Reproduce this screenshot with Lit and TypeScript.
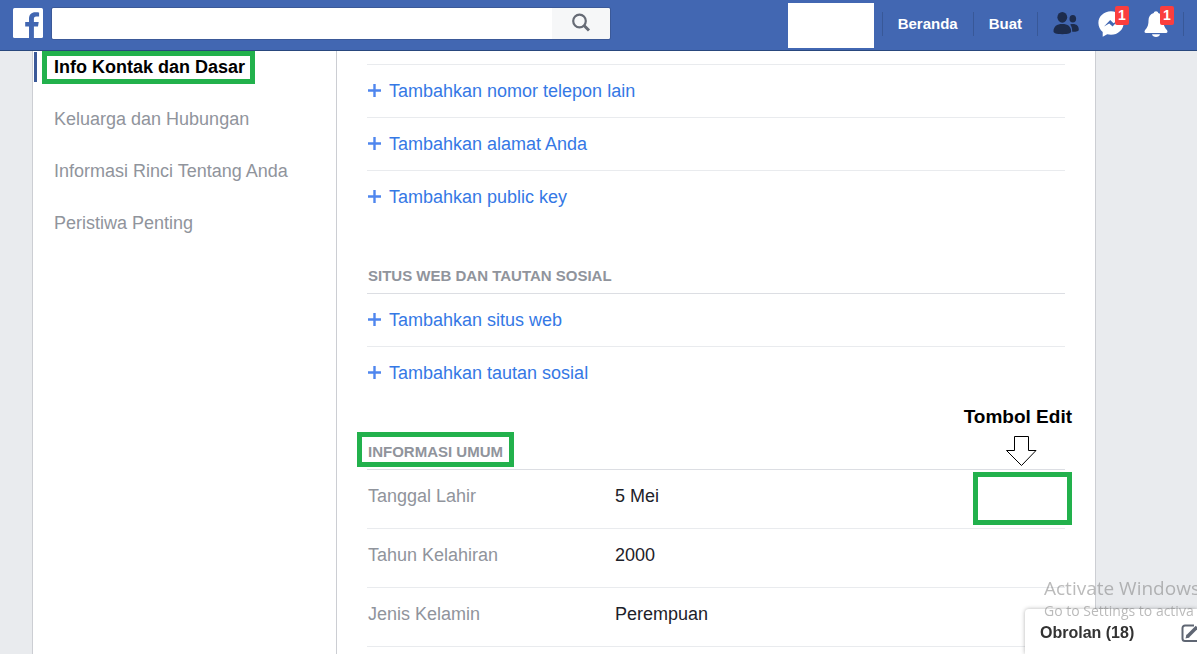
import { LitElement, html, css, svg } from "lit";
import { customElement, property } from "lit/decorators.js";

const NAV_ITEMS = [
  "Info Kontak dan Dasar",
  "Keluarga dan Hubungan",
  "Informasi Rinci Tentang Anda",
  "Peristiwa Penting",
];

const CONTACT_LINKS = [
  "Tambahkan nomor telepon lain",
  "Tambahkan alamat Anda",
  "Tambahkan public key",
];

const SITE_LINKS = ["Tambahkan situs web", "Tambahkan tautan sosial"];

const FIELDS = [
  { label: "Tanggal Lahir", value: "5 Mei", editable: true },
  { label: "Tahun Kelahiran", value: "2000", editable: false },
  { label: "Jenis Kelamin", value: "Perempuan", editable: false },
];

@customElement("top-bar")
class TopBar extends LitElement {
  static styles = css`
    :host {
      display: block;
    }
    .bar {
      box-sizing: border-box;
      display: flex;
      align-items: flex-start;
      height: 51px;
      padding: 0 13px;
      background: #4267b2;
      border-bottom: 1px solid #29487d;
    }
    .logo {
      display: block;
      flex: none;
      margin: 8px 9px 0 0;
      line-height: 0;
    }
    .search {
      display: flex;
      flex: 0 1 558px;
      min-width: 120px;
      height: 31px;
      margin-top: 8px;
      border-radius: 2px;
      overflow: hidden;
      background: #fff;
      box-shadow: 0 0 0 1px #3b5998;
    }
    .query {
      flex: 1;
      min-width: 0;
      border: 0;
      padding: 0 8px;
      background: #fff;
      font: 16px "Liberation Sans", Arial, sans-serif;
      outline: none;
    }
    .go {
      flex: none;
      width: 58px;
      border: 0;
      padding: 0 0 2px;
      background: #f6f7f8;
      line-height: 0;
    }
    .menu {
      display: flex;
      align-items: center;
      flex: none;
      height: 47px;
      margin-left: auto;
    }
    .profile {
      width: 86px;
      height: 45px;
      margin: 4px 8px 0 0;
      background: #fff;
    }
    .link {
      padding: 0 15px;
      color: #fff;
      font: bold 15px/24px "Liberation Sans", Arial, sans-serif;
      text-decoration: none;
    }
    .rule {
      width: 1px;
      height: 24px;
      background: #385898;
    }
    .icons {
      display: flex;
      gap: 19px;
      padding: 0 14px 0 15px;
    }
    .icon {
      position: relative;
      width: 26px;
      height: 26px;
      padding: 0;
      border: 0;
      background: none;
      line-height: 0;
    }
    .badge {
      position: absolute;
      top: -5px;
      left: 17px;
      width: 14px;
      border-radius: 2px;
      background: #fa3e3e;
      color: #fff;
      font: bold 14px/19px "Liberation Sans", Arial, sans-serif;
      text-align: center;
    }
  `;

  render() {
    return html`
      <header class="bar">
        <a class="logo" href="#" aria-label="Facebook">
          <svg width="30" height="30" viewBox="0 0 30 30">
            <rect width="30" height="30" rx="1.5" fill="#fff" />
            <path
              fill="#4267b2"
              d="M16 30V18.600h-3.800V14H16v-3.300C16 6.400 18.500 4.200 22.300 4.200c1.800 0 3.400.1 3.800.2v4h-2.700c-2.100 0-2.500 1-2.500 2.500V14h4.800l-.7 4.600h-4.100V30z"
            />
          </svg>
        </a>
        <form class="search" role="search">
          <input class="query" type="text" aria-label="Cari" />
          <button class="go" type="button" aria-label="Cari">
            <svg width="20" height="20" viewBox="0 0 20 20" fill="none" stroke="#666b75">
              <circle cx="8.500" cy="8" r="6.300" stroke-width="2.200" />
              <path d="M13 12.500l5 5" stroke-width="3" />
            </svg>
          </button>
        </form>
        <nav class="menu">
          <div class="profile"></div>
          <div class="rule"></div>
          <a class="link" href="#">Beranda</a>
          <div class="rule"></div>
          <a class="link" href="#">Buat</a>
          <div class="rule"></div>
          <div class="icons">
            <button class="icon" type="button" aria-label="Permintaan pertemanan">
              <svg width="26" height="26" viewBox="0 0 26 26" fill="#1d2c4d">
                <ellipse cx="9.300" cy="6.300" rx="4.900" ry="5.400" />
                <path d="M.5 20.300c0-4.800 3.300-7.300 8.800-7.300s8.800 2.500 8.800 7.300c0 2.100-2.600 2.900-8.800 2.900S.5 22.400.5 20.300z" />
                <ellipse cx="19.800" cy="7.800" rx="3.300" ry="3.800" />
                <path d="M17.200 13.500c.8-.3 1.700-.4 2.600-.4 3.900 0 6 2.200 6 5.300 0 1.800-2 2.400-6 2.400h-.6c0-3.300-.6-5.500-2-7.300z" />
              </svg>
            </button>
            <button class="icon" type="button" aria-label="Pesan">
              <svg width="26" height="26" viewBox="0 0 26 26">
                <path
                  fill="#fff"
                  d="M13 .3C6 .3.400 5.400.400 12c0 3.600 1.700 6.800 4.300 8.900v4.900l4.500-2.500c1.200.3 2.500.5 3.800.5 7 0 12.600-5.200 12.600-11.800S20 .3 13 .3z"
                />
                <path fill="#4267b2" d="M6 15.600l6.200-6.700 3.300 3.300 5-3.300-5.900 6.700-3.400-3.100z" />
              </svg>
              <span class="badge">1</span>
            </button>
            <button class="icon" type="button" aria-label="Pemberitahuan">
              <svg width="26" height="26" viewBox="0 0 26 26" fill="#fff">
                <path
                  d="M13 .3c1.300 0 2.100.8 2.200 1.800 3.500 1 5.300 3.800 5.300 7.500 0 5.600 1.600 7.500 3.400 9.500.9 1 .9 3-1 3H3.100c-1.900 0-1.900-2-1-3 1.800-2 3.400-3.900 3.400-9.500 0-3.700 1.800-6.500 5.300-7.500C10.900 1.100 11.700.3 13 .3z"
                />
                <path d="M9 23.300h8c-.4 1.700-1.900 2.600-4 2.600s-3.600-.9-4-2.600z" />
              </svg>
              <span class="badge">1</span>
            </button>
          </div>
          <div class="rule"></div>
        </nav>
      </header>
    `;
  }
}

@customElement("add-links")
class AddLinks extends LitElement {
  @property({ attribute: false }) items: string[] = [];

  static styles = css`
    :host {
      display: block;
    }
    .list {
      margin: 0;
      padding: 0;
      list-style: none;
    }
    .item + .item {
      border-top: 1px solid #e9ebee;
    }
    .add {
      display: flex;
      align-items: center;
      gap: 8px;
      height: 52px;
      padding-left: 1px;
      color: #3578e5;
      text-decoration: none;
    }
  `;

  render() {
    return html`
      <ul class="list">
        ${this.items.map(
          (text) => html`
            <li class="item">
              <a class="add" href="#">
                <svg width="13" height="14" viewBox="0 0 13 14">
                  ${svg`<path d="M6.500 0v13M0 6.500h13" stroke="#4f86ee" stroke-width="2.400" />`}
                </svg>
                <span>${text}</span>
              </a>
            </li>
          `
        )}
      </ul>
    `;
  }
}

@customElement("app-root")
class AppRoot extends LitElement {
  static styles = css`
    :host {
      display: flex;
      flex-direction: column;
      min-height: 100vh;
      background: #e9ebee;
      color: #1d2129;
      font: 18px/20px "Liberation Sans", Arial, sans-serif;
    }
    .page {
      flex: 1;
      display: flex;
      width: min(1062px, 100% - 34px);
      margin-right: auto;
      margin-left: 32px;
      border: solid #ccced3;
      border-width: 0 1px;
      background: #fff;
    }
    .side {
      flex: 0 0 303px;
      border-right: 1px solid #ccced3;
    }
    .tab {
      position: relative;
      display: block;
      padding: 6px 0 6px 21px;
      margin-bottom: 20px;
      color: #90949c;
      text-decoration: none;
    }
    .tab.active {
      color: #000;
      font-weight: bold;
    }
    .tab.active::before {
      content: "";
      position: absolute;
      top: 1px;
      bottom: 1px;
      left: 1px;
      width: 3px;
      background: #3b5998;
    }
    .marker {
      position: absolute;
      box-sizing: border-box;
      border: 5px solid #22b14c;
      pointer-events: none;
    }
    .tab .marker {
      top: 0;
      bottom: -1px;
      left: 9px;
      width: 213px;
    }
    .content {
      flex: 1;
      min-width: 0;
      padding: 13px 30px 0;
    }
    .contact {
      border-top: 1px solid #e9ebee;
    }
    .title {
      margin: 0;
      padding: 43px 0 7px 1px;
      border-bottom: 1px solid #dcdee3;
      color: #90949c;
      font-size: 15px;
      line-height: 20px;
    }
    .name {
      position: relative;
    }
    .name .marker {
      inset: -11px -11px -7px;
    }
    .fields {
      margin: 0;
    }
    .field {
      position: relative;
      display: flex;
      height: 42px;
      padding: 16px 0 0 1px;
      border-bottom: 1px solid #e9ebee;
    }
    .label {
      flex: 0 0 247px;
      color: #90949c;
    }
    .value {
      margin: 0;
    }
    .callout {
      position: absolute;
      top: -64px;
      right: -7px;
      display: flex;
      flex-direction: column;
      align-items: flex-end;
      color: #000;
      font-size: 19px;
      font-weight: bold;
      line-height: 22px;
    }
    .arrow {
      margin: 8px 35px 5px 0;
    }
    .edit {
      width: 99px;
      height: 53px;
      border: 5px solid #22b14c;
      background: #fff;
    }
    .chat {
      position: fixed;
      right: 0;
      bottom: 0;
      box-sizing: border-box;
      display: flex;
      align-items: center;
      justify-content: space-between;
      width: 172px;
      height: 45px;
      padding: 2px 0 0 15px;
      overflow: hidden;
      border: 0;
      border-radius: 4px 0 0 0;
      background: #fff;
      box-shadow: 0 0 4px rgba(0, 0, 0, 0.3);
      color: #333;
      font: bold 16px/20px "Liberation Sans", Arial, sans-serif;
    }
    .compose {
      flex: none;
    }
    .watermark {
      position: fixed;
      right: 0;
      bottom: 32px;
      width: 153px;
      overflow: hidden;
      color: rgba(120, 120, 120, 0.5);
      font-family: "Open Sans", "Noto Sans", sans-serif;
      font-size: 14px;
      line-height: 22px;
      white-space: nowrap;
      pointer-events: none;
    }
    .headline {
      font-size: 19px;
      line-height: 24px;
    }
  `;

  render() {
    return html`
      <top-bar></top-bar>
      <main class="page">
        <nav class="side">
          ${NAV_ITEMS.map(
            (text, i) => html`
              <a class="tab ${i === 0 ? "active" : ""}" href="#"
                >${text}${i === 0 ? html`<span class="marker"></span>` : ""}</a
              >
            `
          )}
        </nav>
        <div class="content">
          <section class="contact">
            <add-links .items=${CONTACT_LINKS}></add-links>
          </section>
          <section>
            <h2 class="title">SITUS WEB DAN TAUTAN SOSIAL</h2>
            <add-links .items=${SITE_LINKS}></add-links>
          </section>
          <section>
            <h2 class="title">
              <span class="name">INFORMASI UMUM<span class="marker"></span></span>
            </h2>
            <dl class="fields">
              ${FIELDS.map(
                (f) => html`
                  <div class="field">
                    <dt class="label">${f.label}</dt>
                    <dd class="value">${f.value}</dd>
                    ${f.editable
                      ? html`
                          <dd class="callout">
                            <span>Tombol Edit</span>
                            <svg class="arrow" width="31" height="31" viewBox="0 0 31 31">
                              <path
                                d="M8.500.5h14v14h7.500L15.500 29.500.500 14.500h8z"
                                fill="#fff"
                                stroke="#000"
                              />
                            </svg>
                            <button class="edit" type="button" aria-label="Edit"></button>
                          </dd>
                        `
                      : ""}
                  </div>
                `
              )}
            </dl>
          </section>
        </div>
      </main>
      <button class="chat" type="button">
        <span>Obrolan (18)</span>
        <svg class="compose" width="16" height="20" viewBox="0 0 16 20" fill="none" stroke="#5f6673">
          <path d="M13 2.500H4A2.500 2.500 0 0 0 1.500 5v10.500A2.500 2.500 0 0 0 4 18h12" stroke-width="2" />
          <path d="M6.500 13.500L16 4" stroke-width="3.600" />
          <path d="M4.500 15.500l1-4 3 3z" fill="#5f6673" stroke="none" />
        </svg>
      </button>
      <div class="watermark">
        <div class="headline">Activate Windows</div>
        <div>Go to Settings to activa</div>
      </div>
    `;
  }
}
